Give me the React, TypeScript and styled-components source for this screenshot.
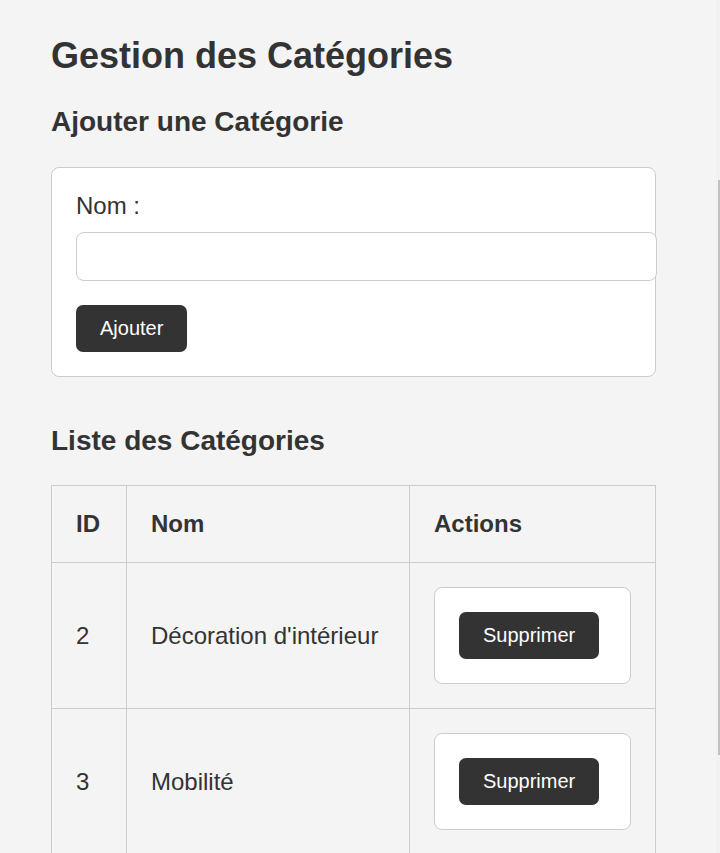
import React from "react";
import styled, { createGlobalStyle } from "styled-components";

const GlobalStyle = createGlobalStyle`
  html, body {
    margin: 0;
    padding: 0;
    background: #f4f4f4;
  }
  body {
    font-family: "Liberation Sans", Arial, sans-serif;
    color: #333;
    overflow: hidden;
  }
`;

const Page = styled.main`
  padding: 35px 0 0 51px;
  width: 605px;
`;

const Title = styled.h1`
  margin: 0 0 29px;
  font-size: 36px;
  font-weight: bold;
  line-height: normal;
`;

const SectionTitle = styled.h2<{ $after: number }>`
  margin: 0 0 ${(p) => p.$after}px;
  font-size: 28px;
  font-weight: bold;
  line-height: normal;
`;

const Card = styled.form`
  box-sizing: border-box;
  background: #fff;
  border: 1px solid #ccc;
  border-radius: 8px;
  padding: 24px;
  margin-bottom: 48px;
`;

const Label = styled.label`
  display: block;
  font-size: 24px;
  line-height: normal;
  margin-bottom: 12px;
`;

const TextInput = styled.input`
  display: block;
  box-sizing: content-box;
  width: 100%;
  height: 47px;
  padding: 0 12px;
  margin: 0;
  border: 1px solid #ccc;
  border-radius: 8px;
  background: #fff;
  font-family: inherit;
  font-size: 20px;
  color: #333;
  outline: none;
`;

const DarkButton = styled.button<{ $top?: number }>`
  display: block;
  margin: ${(p) => p.$top ?? 0}px 0 0;
  height: 47px;
  padding: 0 24px;
  border: none;
  border-radius: 7px;
  background: #333;
  color: #fff;
  font-family: "Liberation Sans", Arial, sans-serif;
  font-size: 20px;
  cursor: pointer;
`;

const Table = styled.table`
  width: 604px;
  border-collapse: collapse;
  table-layout: fixed;
`;

const HeadCell = styled.th`
  border: 1px solid #ccc;
  padding: 24px;
  text-align: left;
  vertical-align: middle;
  font-size: 24px;
  font-weight: bold;
  line-height: normal;
`;

const Cell = styled.td`
  border: 1px solid #ccc;
  padding: 24px;
  text-align: left;
  vertical-align: middle;
  font-size: 24px;
  line-height: normal;
`;

const ActionBox = styled.form`
  background: #fff;
  border: 1px solid #ccc;
  border-radius: 8px;
  padding: 24px;
`;

const ScrollTrack = styled.div`
  position: fixed;
  top: 0;
  right: 0;
  width: 4px;
  height: 100vh;
  background: #f1f1f1;
`;

const ScrollThumb = styled.div`
  position: absolute;
  top: 180px;
  right: 0;
  width: 2px;
  height: 575px;
  background: #c1c1c1;
`;

const categories = [
  { id: 2, name: "Décoration d'intérieur" },
  { id: 3, name: "Mobilité" },
];

export default function App() {
  return (
    <>
      <GlobalStyle />
      <Page>
        <Title>Gestion des Catégories</Title>
        <SectionTitle $after={29}>Ajouter une Catégorie</SectionTitle>
        <Card onSubmit={(e) => e.preventDefault()}>
          <Label htmlFor="nom">Nom :</Label>
          <TextInput id="nom" type="text" />
          <DarkButton type="submit" $top={24}>
            Ajouter
          </DarkButton>
        </Card>
        <SectionTitle $after={28}>Liste des Catégories</SectionTitle>
        <Table>
          <colgroup>
            <col style={{ width: 75 }} />
            <col style={{ width: 283 }} />
            <col style={{ width: 246 }} />
          </colgroup>
          <thead>
            <tr>
              <HeadCell>ID</HeadCell>
              <HeadCell>Nom</HeadCell>
              <HeadCell>Actions</HeadCell>
            </tr>
          </thead>
          <tbody>
            {categories.map((c) => (
              <tr key={c.id}>
                <Cell>{c.id}</Cell>
                <Cell>{c.name}</Cell>
                <Cell>
                  <ActionBox onSubmit={(e) => e.preventDefault()}>
                    <DarkButton type="submit">Supprimer</DarkButton>
                  </ActionBox>
                </Cell>
              </tr>
            ))}
          </tbody>
        </Table>
      </Page>
      <ScrollTrack>
        <ScrollThumb />
      </ScrollTrack>
    </>
  );
}
